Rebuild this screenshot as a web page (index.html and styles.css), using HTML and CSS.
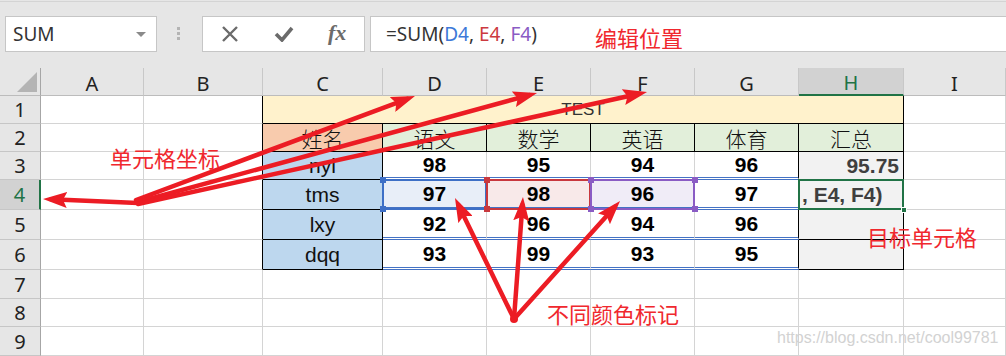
FILE: index.html
```html
<!DOCTYPE html>
<html lang="zh">
<head>
  <meta charset="UTF-8">
  <title>SUM 公式编辑</title>
  <link rel="stylesheet" href="styles.css">
</head>
<body>

  <div class="bar">
    <div class="namebox">SUM<span class="drop"></span></div>
    <span class="grip"></span>
    <div class="fxbox">
      <span class="fxbtn">
        <svg width="18" height="18" viewBox="0 0 18 18"><path d="M2 2 L16 16 M16 2 L2 16" stroke="#6b6b6b" stroke-width="2.4" fill="none"/></svg>
      </span>
      <span class="fxbtn">
        <svg width="20" height="16" viewBox="0 0 20 16"><path d="M2 8 L8 14 L18 2" stroke="#6b6b6b" stroke-width="3.6" fill="none"/></svg>
      </span>
      <span class="fxbtn fx">fx</span>
    </div>
    <div class="formula">=SUM(<span class="rd">D4</span>, <span class="re">E4</span>, <span class="rf">F4</span>)</div>
  </div>

  <div class="sheet">
    <div class="corner"><span></span></div>
    <div class="ch">A</div>
    <div class="ch">B</div>
    <div class="ch">C</div>
    <div class="ch">D</div>
    <div class="ch">E</div>
    <div class="ch">F</div>
    <div class="ch">G</div>
    <div class="ch on">H</div>
    <div class="ch">I</div>

    <div class="rh">1</div>
    <div class="c"></div>
    <div class="c edge"></div>
    <div class="c title">TEST</div>
    <div class="c"></div>

    <div class="rh">2</div>
    <div class="c"></div>
    <div class="c edge"></div>
    <div class="c head name">姓名</div>
    <div class="c head">语文</div>
    <div class="c head">数学</div>
    <div class="c head">英语</div>
    <div class="c head">体育</div>
    <div class="c head">汇总</div>
    <div class="c"></div>

    <div class="rh">3</div>
    <div class="c"></div>
    <div class="c edge"></div>
    <div class="c who">nyl</div>
    <div class="c num">98</div>
    <div class="c num">95</div>
    <div class="c num">94</div>
    <div class="c num last">96</div>
    <div class="c tot">95.75</div>
    <div class="c"></div>

    <div class="rh on">4</div>
    <div class="c"></div>
    <div class="c edge"></div>
    <div class="c who">tms</div>
    <div class="c num ref blue">97<i class="h tl"></i><i class="h tr"></i><i class="h bl"></i><i class="h br"></i></div>
    <div class="c num ref red">98<i class="h tl"></i><i class="h tr"></i><i class="h bl"></i><i class="h br"></i></div>
    <div class="c num ref purple">96<i class="h tl"></i><i class="h tr"></i><i class="h bl"></i><i class="h br"></i></div>
    <div class="c num last">97</div>
    <div class="c tot editing">, E4, F4)<i class="fill"></i></div>
    <div class="c"></div>

    <div class="rh">5</div>
    <div class="c"></div>
    <div class="c edge"></div>
    <div class="c who">lxy</div>
    <div class="c num">92</div>
    <div class="c num">96</div>
    <div class="c num">94</div>
    <div class="c num last">96</div>
    <div class="c tot"></div>
    <div class="c"></div>

    <div class="rh">6</div>
    <div class="c"></div>
    <div class="c edge"></div>
    <div class="c who">dqq</div>
    <div class="c num">93</div>
    <div class="c num">99</div>
    <div class="c num">93</div>
    <div class="c num last">95</div>
    <div class="c tot"></div>
    <div class="c"></div>

    <div class="rh">7</div>
    <div class="c"></div><div class="c"></div><div class="c"></div><div class="c"></div><div class="c"></div><div class="c"></div><div class="c"></div><div class="c"></div><div class="c"></div>
    <div class="rh">8</div>
    <div class="c"></div><div class="c"></div><div class="c"></div><div class="c"></div><div class="c"></div><div class="c"></div><div class="c"></div><div class="c"></div><div class="c"></div>
    <div class="rh">9</div>
    <div class="c"></div><div class="c"></div><div class="c"></div><div class="c"></div><div class="c"></div><div class="c"></div><div class="c"></div><div class="c"></div><div class="c"></div>
  </div>

  <!-- annotations drawn over the sheet -->
  <div class="marks">
    <svg width="1006" height="356" viewBox="0 0 1006 356">
      <defs>
        <marker id="head" markerUnits="userSpaceOnUse" markerWidth="24" markerHeight="16" refX="16" refY="8" orient="auto">
          <path d="M0 0 L24 8 L0 16 L4 8 Z" fill="#ec1c24"/>
        </marker>
      </defs>
      <g stroke="#ec1c24" stroke-width="4.5" fill="none" stroke-linecap="round">
        <path d="M138 203 L51 199.3" marker-end="url(#head)"/>
        <path d="M136 200 L407.5 98.8" marker-end="url(#head)"/>
        <path d="M138 202 L529.3 95.1" marker-end="url(#head)"/>
        <path d="M138 204 L639.2 93.7" marker-end="url(#head)"/>
        <path d="M514 319 L458.5 205.2" marker-end="url(#head)"/>
        <path d="M514 319 L522.4 205" marker-end="url(#head)"/>
        <path d="M514 319 L614.7 207" marker-end="url(#head)"/>
      </g>
      <circle cx="514" cy="319" r="4" fill="#ec1c24"/>
    </svg>
    <span class="note n-edit">编辑位置</span>
    <span class="note n-cell">单元格坐标</span>
    <span class="note n-target">目标单元格</span>
    <span class="note n-color">不同颜色标记</span>
    <span class="wm">https://blog.csdn.net/cool99781</span>
  </div>

</body>
</html>
```

FILE: styles.css
```css
body {
  margin: 0;
  width: 1006px;
  height: 356px;
  overflow: hidden;
  position: relative;
  background: #e6e6e6;
  font-family: 'Noto Sans', 'Noto Sans CJK SC', sans-serif;
}

/* formula bar */
.bar {
  display: flex;
  align-items: flex-start;
  height: 67px;
  margin-top: 1px;
  border-top: 1px solid #d4d4d4;
  padding: 14px 0 0 5px;
  box-sizing: border-box;
}

.namebox {
  width: 152px;
  height: 36px;
  box-sizing: border-box;
  border: 1px solid #c6c6c6;
  background: white;
  display: flex;
  align-items: center;
  padding-left: 7px;
  font-size: 19px;
  color: #333;
  position: relative;
}

.drop {
  margin-left: auto;
  margin-right: 10px;
  width: 0;
  height: 0;
  border-left: 5px solid transparent;
  border-right: 5px solid transparent;
  border-top: 5px solid #8a8a8a;
}

.grip {
  width: 3px;
  height: 14px;
  margin: 11px 22px 0 20px;
  background: linear-gradient(#b4b4b4 55%, transparent 0) 0 0 / 3px 5px;
}

.fxbox {
  width: 163px;
  height: 36px;
  box-sizing: border-box;
  border: 1px solid #c6c6c6;
  background: white;
  display: flex;
  align-items: center;
}

.fxbtn {
  width: 54px;
  display: flex;
  justify-content: center;
  align-items: center;
}

.fxbtn.fx {
  font-family: 'Liberation Serif', serif;
  font-style: italic;
  font-weight: bold;
  font-size: 22px;
  color: #6b6b6b;
  margin-top: -3px;
}

.formula {
  flex: 1;
  margin-left: 5px;
  height: 36px;
  box-sizing: border-box;
  border: 1px solid #c6c6c6;
  border-right: none;
  background: white;
  display: flex;
  align-items: center;
  padding-left: 15px;
  font-size: 19px;
  color: #333;
  white-space: pre;
}

.rd { color: #3c78d8; }
.re { color: #cc3a3f; }
.rf { color: #8a5cc4; }

/* sheet grid */
.sheet {
  display: grid;
  grid-template-columns: 41px 103px 119px 120px 104px 104px 104px 104px 105px 102px;
  grid-template-rows: 28px 28px 28px 28px 30px 30px 30px 29px 28px 29px;
  background: white;
}

.sheet > div {
  box-sizing: border-box;
  border-right: 1px solid #d4d4d4;
  border-bottom: 1px solid #d4d4d4;
  display: flex;
  align-items: center;
  justify-content: center;
}

.corner {
  background: #e6e6e6;
  align-items: flex-end !important;
  justify-content: flex-end !important;
  padding: 0 3px 3px 0;
  border-right-color: #a6a6a6 !important;
  border-bottom-color: #bcbcbc !important;
}

.corner span {
  width: 0;
  height: 0;
  border-left: 20px solid transparent;
  border-bottom: 20px solid #b4b4b4;
}

.ch {
  background: #e6e6e6;
  border-right-color: #c8c8c8 !important;
  border-bottom-color: #bcbcbc !important;
  font-size: 20px;
  color: #222;
  padding-top: 3px;
}

.ch.on {
  background: #d2d2d2;
  color: #217346;
  border-bottom: 2px solid #217346 !important;
}

.rh {
  background: #e6e6e6;
  border-right-color: #a6a6a6 !important;
  border-bottom-color: #c6c6c6 !important;
  font-size: 20px;
  color: #222;
}

.rh.on {
  background: #d2d2d2;
  color: #217346;
  border-right: 2px solid #217346 !important;
}

.c {
  font-family: 'Liberation Sans', 'Noto Sans CJK SC', sans-serif;
  font-size: 21px;
  color: #111;
}

.c.edge {
  border-right-color: #000 !important;
}

.c.title {
  grid-column: span 6;
  background: #fff2cc;
  border-right-color: #000 !important;
  border-bottom-color: #000 !important;
  font-size: 17px;
  color: #333;
}

.c.head {
  background: #e2efda;
  border-right-color: #000 !important;
  border-bottom-color: #000 !important;
  font-family: 'Noto Sans CJK SC', sans-serif;
  font-weight: 300;
  font-size: 21px;
}

.c.head.name {
  background: #f8cbad;
}

.c.who {
  background: #bdd7ee;
  border-right-color: #000 !important;
  border-bottom-color: #000 !important;
}

.c.num {
  font-weight: bold;
  color: #000;
  border-bottom: 3px double #4472c4;
}

.c.num.last {
  border-right-color: #000;
}

.c.tot {
  background: #f2f2f2;
  border-right-color: #000 !important;
  border-bottom-color: #000 !important;
  justify-content: flex-end;
  padding-right: 4px;
  font-weight: bold;
  color: #3f3f3f;
}

/* referenced cells while editing */
.c.ref {
  position: relative;
}

.c.ref::after {
  content: '';
  position: absolute;
  top: -1px;
  left: -1px;
  right: -1px;
  bottom: -3px;
  border: 2px solid var(--line);
}

.c.blue { background: #e8eef8; --line: #3d6fc6; }
.c.red { background: #f8e9e9; --line: #c8383e; }
.c.purple { background: #f0ecf7; --line: #8a5cc4; }

.h {
  position: absolute;
  width: 6px;
  height: 6px;
  background: var(--line);
  z-index: 2;
}
.h.tl { top: -3px; left: -3px; }
.h.tr { top: -3px; right: -4px; }
.h.bl { bottom: -5px; left: -3px; }
.h.br { bottom: -5px; right: -4px; }

.c.editing {
  position: relative;
  justify-content: flex-start;
  padding-left: 3px;
}

.c.editing::after {
  content: '';
  position: absolute;
  top: -1px;
  left: -1px;
  right: -1px;
  bottom: -1px;
  border: 2px solid #217346;
}

.fill {
  position: absolute;
  right: -4px;
  bottom: -4px;
  width: 6px;
  height: 6px;
  background: #217346;
  border: 1px solid white;
  box-sizing: border-box;
  z-index: 2;
}

/* annotation layer */
.marks {
  position: absolute;
  top: 0;
  left: 0;
  width: 1006px;
  height: 356px;
  pointer-events: none;
}

.marks svg {
  position: absolute;
  top: 0;
  left: 0;
}

.note {
  position: absolute;
  font-family: 'Noto Sans CJK SC', sans-serif;
  font-size: 22px;
  line-height: 26px;
  color: #f0282e;
}

.n-edit { left: 595px; top: 24px; }
.n-cell { left: 110px; top: 144px; }
.n-target { left: 867px; top: 223px; }
.n-color { left: 547px; top: 300px; }

.wm {
  position: absolute;
  left: 777px;
  top: 329px;
  font-family: 'Liberation Sans', sans-serif;
  font-size: 16px;
  color: #d2d2d2;
}
```
